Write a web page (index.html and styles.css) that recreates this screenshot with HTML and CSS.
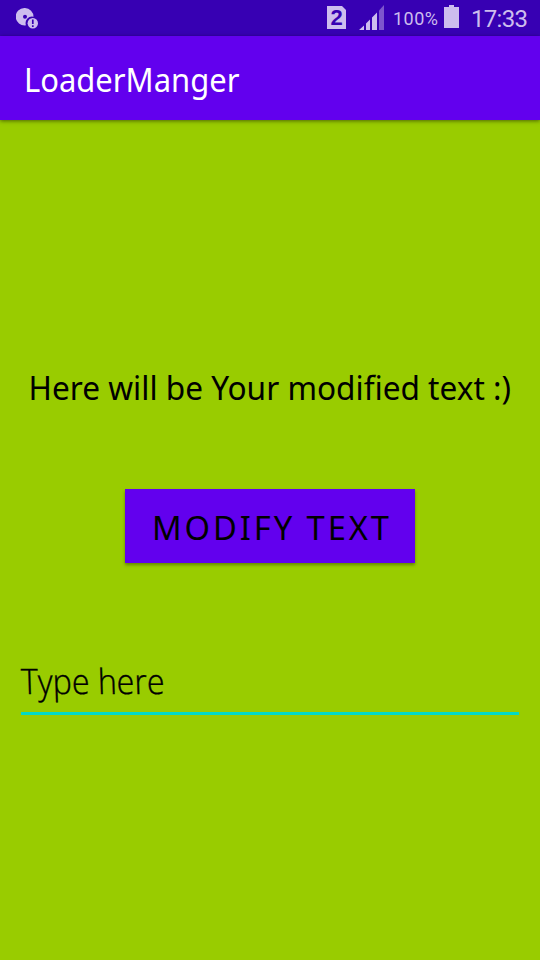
FILE: index.html
```html
<!DOCTYPE html>
<html lang="en">
<head>
<meta charset="utf-8">
<meta name="viewport" content="width=device-width, initial-scale=1">
<title>LoaderManger</title>
<link rel="stylesheet" href="styles.css">
</head>
<body>
<div class="status-bar">
  <svg class="disc" width="24" height="22" viewBox="0 0 24 22">
    <path fill="#cdbdee" fill-rule="evenodd" d="M9 0a9 8.7 0 0 1 8.5 8.7A6.5 6.5 0 0 0 10 17.3A9 8.7 0 1 1 9 0ZM9 6.7a2 2 0 1 0 0 4a2 2 0 0 0 0-4Z"/>
    <circle cx="16.8" cy="15.2" r="5.2" fill="#cdbdee"/>
    <path stroke="#3700b3" stroke-width="1.7" d="M16.8 11.6v4.4M16.8 17.2v1.7"/>
  </svg>
  <span class="spacer"></span>
  <span class="sim">2</span>
  <svg class="signal" width="26" height="26" viewBox="0 0 26 26">
    <path fill="#cdbdee" d="M0 25l5-4.5V25ZM7 18.5l4-4V25H7ZM13 12.5l5-5V25h-5Z"/>
    <path fill="#7d55cd" d="M20 5.5L25 0v25h-5Z"/>
  </svg>
  <span class="percent">100%</span>
  <svg class="battery" width="15" height="23" viewBox="0 0 15 23">
    <path fill="#cdbdee" d="M0 2h5V0h5v2h5v21H0Z"/>
  </svg>
  <time class="clock">17:33</time>
</div>
<header class="app-bar"><h1 class="title">LoaderManger</h1></header>
<main class="content">
  <p class="message">Here will be Your modified text :)</p>
  <button class="modify" type="button"><span class="modify-label">MODIFY TEXT</span></button>
  <div class="field"><span class="hint">Type here</span></div>
</main>
</body>
</html>
```
FILE: styles.css
```css
* { box-sizing: border-box; }
body {
  margin: 0;
  height: 960px;
  overflow: hidden;
  display: flex;
  flex-direction: column;
  background: #99cc00;
  font-family: "Noto Sans", sans-serif;
  white-space: nowrap;
}
.status-bar {
  height: 36px;
  flex: none;
  display: flex;
  align-items: flex-start;
  padding: 0 12px 0 16px;
  background: #3700b3;
  color: #cdbdee;
  font-family: Roboto, sans-serif;
}
.disc { margin-top: 8px; }
.spacer { flex: 1; }
.sim {
  width: 19px;
  height: 23px;
  margin: 6px 13px 0 0;
  background: #cdbdee;
  clip-path: polygon(0 0, 15px 0, 100% 4px, 100% 100%, 0 100%);
  color: #3700b3;
  font: bold 22px/24px "Liberation Sans", sans-serif;
  text-align: center;
}
.signal { margin: 5px 8px 0 0; }
.percent { width: 46px; margin-right: 5px; font-size: 18px; line-height: 38px; letter-spacing: 0.5px; }
.battery { margin: 5px 12px 0 0; }
.clock { width: 57px; font-size: 24px; line-height: 38px; letter-spacing: -0.7px; }
.app-bar {
  height: 84px;
  flex: none;
  display: flex;
  align-items: center;
  padding: 2px 24px 0;
  background: #6200ee;
  box-shadow: 0 1px 4px rgba(0, 0, 0, .5);
}
.title {
  margin: 0;
  color: #fff;
  font-size: 33.5px;
  font-weight: 400;
  line-height: 46px;
  transform: scaleX(.924);
  transform-origin: left;
}
.content {
  display: flex;
  flex-direction: column;
  align-items: center;
  padding: 244px 0 0;
}
.message {
  margin: 0;
  font-size: 33.5px;
  line-height: 46px;
  transform: scaleX(.943);
}
.modify {
  width: 290px;
  height: 74px;
  margin-top: 79px;
  padding: 2px 0 0 3px;
  border: 0;
  background: #6200ee;
  color: #000;
  box-shadow: 0 2px 3px rgba(0, 0, 0, .35);
  font: 400 33.5px/46px "Noto Sans", sans-serif;
  letter-spacing: 3px;
}
.modify-label { display: inline-block; transform: scaleX(.976); }
.field {
  width: 498px;
  height: 62px;
  margin-top: 90px;
  border-bottom: 3px solid #03dac5;
}
.hint {
  display: inline-block;
  font: 300 35px/56px "Open Sans", sans-serif;
  -webkit-text-stroke: .4px #000;
  transform: scaleX(.918) skewX(2deg);
  transform-origin: left;
}
```
